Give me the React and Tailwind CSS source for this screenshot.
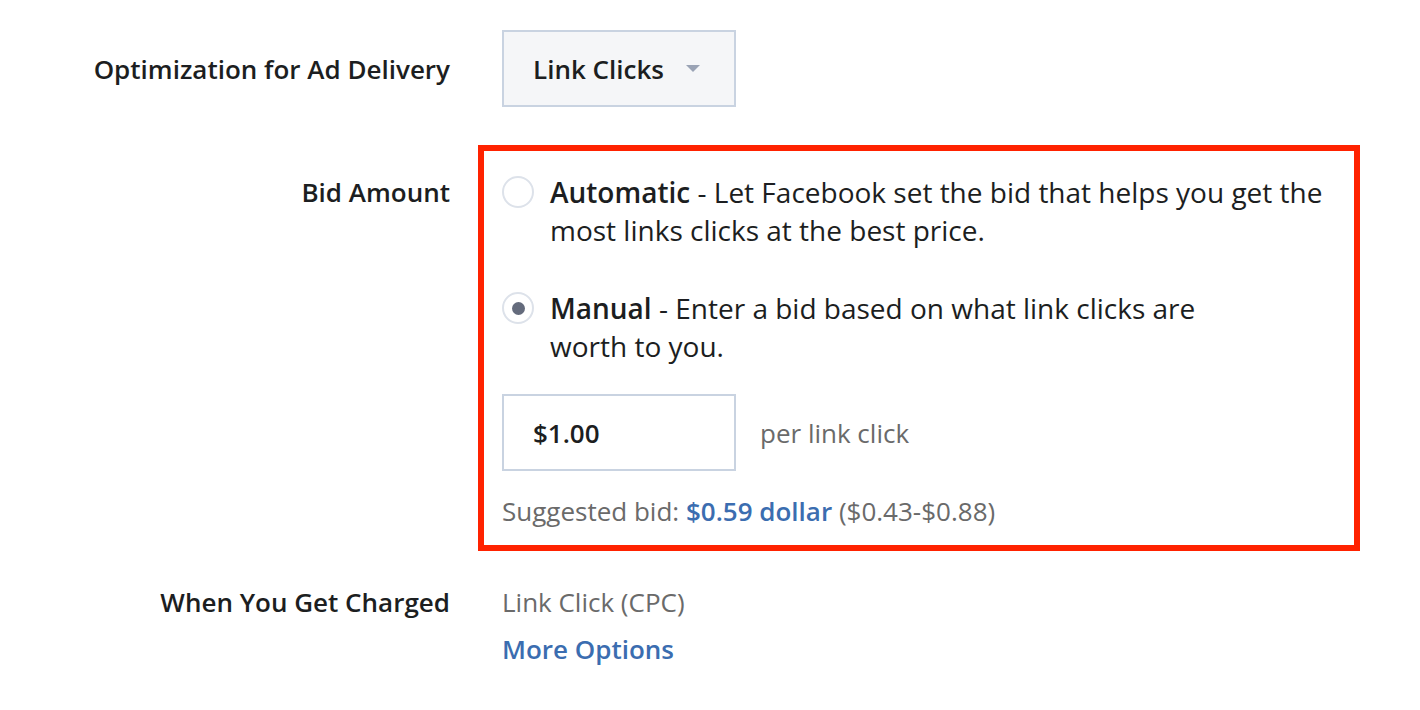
import React, { useState } from 'react';

const LABEL = 'w-[450px] shrink-0 text-right font-semibold text-[#1c1e21]';

function Radio({ checked, onClick }) {
  return (
    <button
      onClick={onClick}
      className="mt-[3px] w-8 h-8 shrink-0 rounded-full border-2 border-[#dde2ea] bg-white flex items-center justify-center"
    >
      {checked && <span className="w-[13px] h-[13px] rounded-full bg-[#646b7c]" />}
    </button>
  );
}

export default function App() {
  const [mode, setMode] = useState('manual');

  return (
    <div
      className="w-[1420px] h-[710px] bg-white text-[26px] leading-[38px] text-[#1c1e21]"
      style={{ fontFamily: '"Open Sans", "Liberation Sans", sans-serif' }}
    >
      <div className="pt-[30px]">
        {/* Optimization */}
        <div className="flex items-center">
          <div className={LABEL}>Optimization for Ad Delivery</div>
          <button className="ml-[52px] w-[234px] h-[77px] border-2 border-[#c9d3e1] bg-[#f5f6f8] flex items-center pl-[29px] gap-[22px]">
            <span className="font-semibold">Link Clicks</span>
            <svg width="14" height="7" viewBox="0 0 14 7">
              <path d="M0 0h14L7 7z" fill="#9aa3b5" />
            </svg>
          </button>
        </div>

        {/* Bid Amount */}
        <div className="flex items-start mt-[38px]">
          <div className={`${LABEL} pt-[28px]`}>Bid Amount</div>
          <div className="ml-[28px] w-[882px] h-[406px] border-[6px] border-[#ff2200] pl-[18px] pt-[22px]">
            <div className="flex gap-4">
              <Radio checked={mode === 'auto'} onClick={() => setMode('auto')} />
              <p className="max-w-[800px] text-[28px]">
                <span className="font-semibold">Automatic</span> - Let Facebook set the bid that helps you get the most links clicks at the best price.
              </p>
            </div>
            <div className="flex gap-4 mt-[40px]">
              <Radio checked={mode === 'manual'} onClick={() => setMode('manual')} />
              <p className="max-w-[690px] text-[28px]">
                <span className="font-semibold">Manual</span> - Enter a bid based on what link clicks are worth to you.
              </p>
            </div>
            <div className="flex items-center gap-6 mt-[29px]">
              <div className="w-[234px] h-[77px] border-2 border-[#c9d3e1] bg-white flex items-center pl-[29px] font-semibold">
                $1.00
              </div>
              <span className="text-[#6a6a6a]">per link click</span>
            </div>
            <p className="mt-[22px] leading-[36px] text-[#6a6a6a]">
              Suggested bid: <span className="font-semibold text-[#3b6db0]">$0.59 dollar</span> ($0.43-$0.88)
            </p>
          </div>
        </div>

        {/* When You Get Charged */}
        <div className="flex items-start mt-[32px]">
          <div className={LABEL}>When You Get Charged</div>
          <div className="ml-[52px]">
            <p className="text-[#6a6a6a]">Link Click (CPC)</p>
            <a className="block mt-[9px] font-semibold text-[#3b6db0]">More Options</a>
          </div>
        </div>
      </div>
    </div>
  );
}
